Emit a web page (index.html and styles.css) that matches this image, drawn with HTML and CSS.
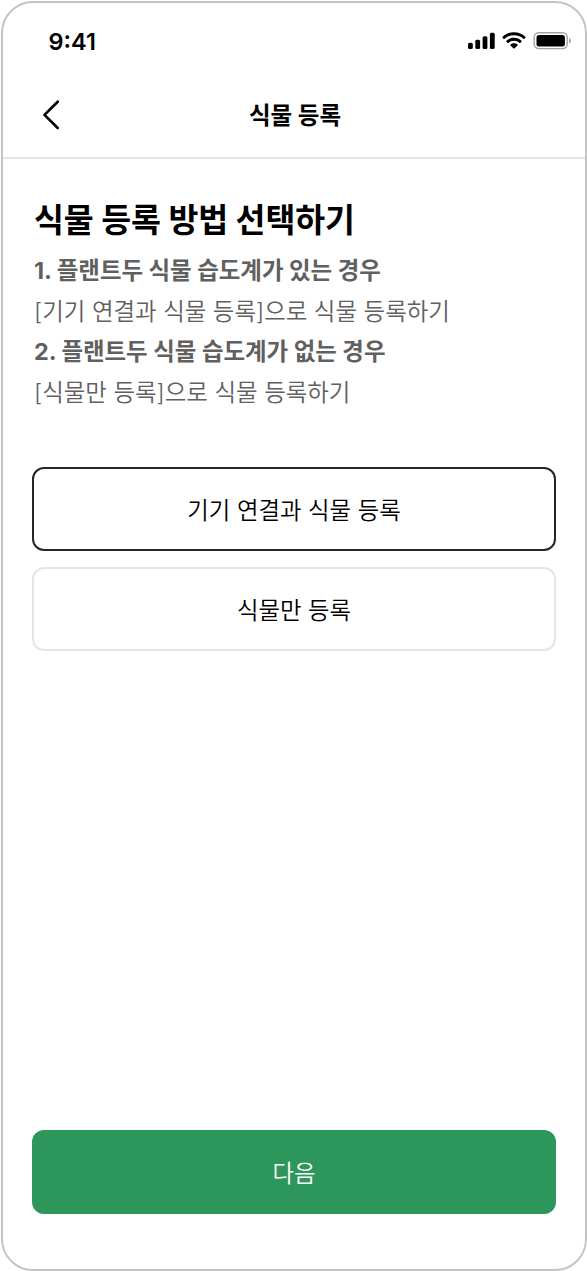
FILE: index.html
```html
<!DOCTYPE html>
<html lang="ko">
<head>
<meta charset="utf-8">
<title>식물 등록</title>
<link rel="stylesheet" href="styles.css">
</head>
<body>
<div class="phone">
  <div class="status">
    <span class="time">9:41</span>
    <svg class="status-icons" width="104" height="20" viewBox="0 0 104 20">
      <rect x="0" y="10.700" width="4.800" height="6.300" rx="1.500"/>
      <rect x="7.300" y="7.700" width="4.800" height="9.300" rx="1.500"/>
      <rect x="14.600" y="4.200" width="4.800" height="12.800" rx="1.500"/>
      <rect x="21.900" y="0.700" width="4.800" height="16.300" rx="1.500"/>
      <path d="M46 3.300 C49.800 3.300 53 4.600 55.600 6.900 Q56 7.200 56.300 6.900 L57.500 5.500 Q57.900 5.100 57.400 4.700 C54.400 1.900 50.400 0.300 46 0.300 C41.600 0.300 37.600 1.900 34.600 4.700 Q34.100 5.100 34.500 5.500 L35.700 6.900 Q36 7.200 36.400 6.900 C39 4.600 42.200 3.300 46 3.300 Z M46 8.800 C48.200 8.800 50 9.600 51.500 10.900 Q51.900 11.200 52.200 10.900 L53.700 9.400 Q54 9 53.600 8.700 C51.600 6.900 49 5.800 46 5.800 C43 5.800 40.400 6.900 38.400 8.700 Q38 9 38.300 9.400 L39.800 10.900 Q40.100 11.200 40.500 10.900 C42 9.600 43.800 8.800 46 8.800 Z M49.600 13.400 Q50 13 49.500 12.600 C48.600 11.800 47.400 11.300 46 11.300 C44.600 11.300 43.400 11.800 42.500 12.600 Q42 13 42.400 13.400 L45.600 16.400 Q46 16.800 46.400 16.400 Z"/>
      <rect class="battery-shell" x="66.200" y="0.800" width="33" height="15.800" rx="4.500"/>
      <rect x="68.500" y="3" width="28.400" height="11.500" rx="2.500"/>
      <path class="battery-cap" d="M101 6 C103.600 7 103.600 10.500 101 11.500 Z"/>
    </svg>
  </div>
  <header class="header">
    <svg class="back" width="20" height="32" viewBox="0 0 20 32"><path d="M16.700 2.800 L3.500 15.900 L16.700 29"/></svg>
    <div class="page-title">식물 등록</div>
  </header>
  <main class="content">
    <h1>식물 등록 방법 선택하기</h1>
    <div class="guide">
      <p class="strong">1. 플랜트두 식물 습도계가 있는 경우</p>
      <p>[기기 연결과 식물 등록]으로 식물 등록하기</p>
      <p class="strong">2. 플랜트두 식물 습도계가 없는 경우</p>
      <p>[식물만 등록]으로 식물 등록하기</p>
    </div>
    <div class="options">
      <button class="option selected">기기 연결과 식물 등록</button>
      <button class="option">식물만 등록</button>
    </div>
  </main>
  <button class="next">다음</button>
</div>
</body>
</html>
```
FILE: styles.css
```css
* { box-sizing: border-box; }
body { margin: 0; padding: 1px 0 0 1px; background: #fff; font-family: Inter, "Noto Sans CJK KR", sans-serif; color: #000; }
.phone { width: 586px; height: 1270px; border: 2px solid #c4c4c4; border-radius: 32px; background: #fff; display: flex; flex-direction: column; overflow: hidden; }
.status { height: 69px; padding: 9px 13px 0 45.500px; display: flex; justify-content: space-between; align-items: center; }
.time { font-size: 23.500px; font-weight: 600; line-height: 28px; }
.status-icons { display: block; }
.battery-shell { fill: none; stroke: #a3a3a3; stroke-width: 1.4; }
.battery-cap { fill: #a3a3a3; }
.header { height: 87px; border-bottom: 2px solid #e5e5e5; display: grid; grid-template-columns: 81px 1fr 79px; align-items: center; }
.back { margin-left: 38px; fill: none; stroke: #000; stroke-width: 2.7; stroke-linecap: round; stroke-linejoin: round; }
.page-title { text-align: center; font-size: 23.500px; font-weight: 700; padding-bottom: 2px; }
.content { flex: 1; padding: 38px 29px 0; }
h1 { margin: 0 0 0 2px; font-size: 32.500px; line-height: 48px; font-weight: 700; letter-spacing: -0.1px; white-space: nowrap; }
.guide { margin: 6px 0 0 2px; color: #606060; font-size: 23.450px; line-height: 40.500px; font-weight: 350; }
.guide p { margin: 0; white-space: nowrap; }
.guide .strong { font-weight: 700; }
.options { margin-top: 54px; display: grid; gap: 16px; }
button { font-family: inherit; font-size: 23.400px; height: 84px; border-radius: 12px; padding: 0; }
.option { border: 2px solid #e5e5e5; background: #fff; color: #000; font-weight: 350; }
.selected { border-color: #262626; }
.next { margin: 0 29px 55px; border: 0; background: #2d965b; color: #fff; flex: none; font-weight: 350; }
```
